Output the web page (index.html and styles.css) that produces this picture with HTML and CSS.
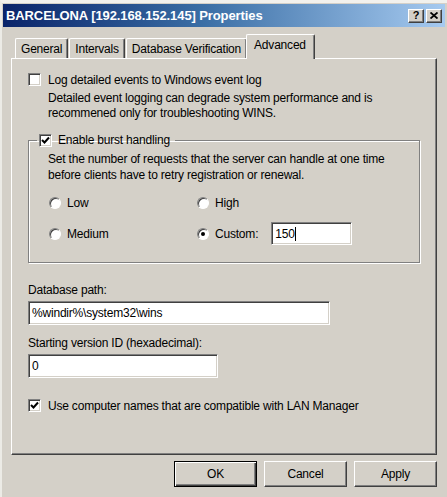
FILE: index.html
```html
<!DOCTYPE html>
<html lang="en">
<head>
  <meta charset="UTF-8">
  <meta name="viewport" content="width=device-width, initial-scale=1.0">
  <title>BARCELONA Properties</title>
  <link rel="stylesheet" href="styles.css">
</head>
<body>
  <div class="window">
    <div class="titlebar">
      <span class="title">BARCELONA [192.168.152.145] Properties</span>
      <div class="caption-buttons">
        <span class="caption-btn help">?</span>
        <span class="caption-btn">
          <svg width="8" height="7" viewBox="0 0 8 7"><path d="M0.5 0.5 L7.5 6.5 M7.5 0.5 L0.5 6.5" stroke="#000" stroke-width="1.8"/></svg>
        </span>
      </div>
    </div>

    <div class="tabs">
      <div class="tab">General</div>
      <div class="tab">Intervals</div>
      <div class="tab">Database Verification</div>
      <div class="tab active">Advanced</div>
    </div>

    <div class="panel">
      <label class="check-row">
        <span class="checkbox"></span>
        Log detailed events to Windows event log
      </label>
      <p class="note">Detailed event logging can degrade system performance and is<br>recommened only for troubleshooting WINS.</p>

      <fieldset class="group">
        <legend>
          <span class="checkbox"><svg width="9" height="9" viewBox="0 0 9 9"><path d="M1 4 L3.5 6.5 L8 1.5" fill="none" stroke="#000" stroke-width="2"/></svg></span>
          Enable burst handling
        </legend>
        <p class="group-note">Set the number of requests that the server can handle at one time<br>before clients have to retry registration or renewal.</p>
        <div class="radios">
          <label class="radio-row"><span class="radio"></span>Low</label>
          <label class="radio-row"><span class="radio"></span>High</label>
          <label class="radio-row"><span class="radio"></span>Medium</label>
          <label class="radio-row"><span class="radio selected"></span>Custom:<span class="textbox custom">150<span class="caret"></span></span></label>
        </div>
      </fieldset>

      <div class="field-label">Database path:</div>
      <div class="textbox path">%windir%\system32\wins</div>

      <div class="field-label second">Starting version ID (hexadecimal):</div>
      <div class="textbox version">0</div>

      <label class="check-row lanman">
        <span class="checkbox"><svg width="9" height="9" viewBox="0 0 9 9"><path d="M1 4 L3.5 6.5 L8 1.5" fill="none" stroke="#000" stroke-width="2"/></svg></span>
        Use computer names that are compatible with LAN Manager
      </label>
    </div>

    <div class="buttons">
      <span class="button default">OK</span>
      <span class="button">Cancel</span>
      <span class="button">Apply</span>
    </div>
  </div>
</body>
</html>
```

FILE: styles.css
```css
body {
  margin: 0;
  background-color: #d4d0c8;
  font-family: 'Liberation Sans', Arial, sans-serif;
  font-size: 12px;
  letter-spacing: -0.2px;
  color: #000;
}
.window {
  width: 447px;
  height: 497px;
  border-top: 3px solid #f2f1ed;
  border-left: 2px solid #ecebe6;
  box-sizing: border-box;
}
.titlebar {
  height: 23px;
  margin: 1px 2px 0 1px;
  background: linear-gradient(to right, #0a246a 0%, #3a6ea5 45%, #a6caf0 100%);
  display: flex;
  align-items: center;
  justify-content: space-between;
  padding: 0 3px 0 3px;
}
.title {
  color: #fff;
  font-weight: bold;
  font-size: 13px;
  letter-spacing: -0.1px;
}
.caption-buttons {
  display: flex;
  gap: 2px;
}
.caption-btn {
  width: 16px;
  height: 14px;
  box-sizing: border-box;
  background-color: #d4d0c8;
  border: 1px solid;
  border-color: #fff #404040 #404040 #fff;
  box-shadow: inset -1px -1px #808080;
  display: flex;
  align-items: center;
  justify-content: center;
}
.help {
  font-weight: bold;
  font-size: 11px;
  line-height: 1;
}
.tabs {
  display: flex;
  align-items: flex-end;
  margin: 7px 0 0 11px;
  padding-left: 2px;
  height: 24px;
  position: relative;
  z-index: 1;
}
.tab {
  height: 20px;
  padding: 1px 5px 0 5px;
  box-sizing: border-box;
  border: 1px solid;
  border-color: #fff #404040 transparent #fff;
  border-bottom: none;
  border-radius: 2px 2px 0 0;
  box-shadow: inset -1px 0 #808080;
  display: flex;
  align-items: center;
  margin-right: 1px;
}
.tab.active {
  height: 25px;
  padding: 0 8px 4px 7px;
  margin: 0 0 -1px -2px;
  background-color: #d4d0c8;
}
.panel {
  width: 426px;
  height: 397px;
  margin-left: 9px;
  box-sizing: border-box;
  border: 1px solid;
  border-color: #fff #404040 #404040 #fff;
  box-shadow: inset -1px -1px #808080;
  padding: 14px 16px 0 16px;
}
.check-row {
  display: flex;
  align-items: center;
  gap: 7px;
  height: 13px;
}
.checkbox {
  width: 13px;
  height: 13px;
  box-sizing: border-box;
  background-color: #fff;
  border: 1px solid;
  border-color: #808080 #fff #fff #808080;
  box-shadow: inset 1px 1px #404040, inset -1px -1px #d4d0c8;
  display: flex;
  align-items: center;
  justify-content: center;
  flex-shrink: 0;
}
.note {
  margin: 5px 0 0 20px;
  line-height: 15px;
}
.group {
  margin: 12px 0 0 0;
  width: 392px;
  box-sizing: border-box;
  border: 1px solid #808080;
  box-shadow: inset 1px 1px #fff, 1px 1px #fff;
  padding: 3px 0 17px 19px;
}
.group legend {
  display: flex;
  align-items: center;
  gap: 6px;
  padding: 0 5px 0 2px;
  margin-left: -11px;
  line-height: 15px;
}
.group-note {
  margin: 0;
  line-height: 16px;
}
.radios {
  display: grid;
  grid-template-columns: 148px auto;
  grid-auto-rows: 23px;
  row-gap: 8px;
  margin: 8px 0 0 1px;
}
.radio-row {
  display: flex;
  align-items: center;
  gap: 6px;
}
.radio {
  width: 12px;
  height: 12px;
  box-sizing: border-box;
  border-radius: 50%;
  background-color: #fff;
  border: 1px solid;
  border-color: #808080 #fff #fff #808080;
  box-shadow: inset 1px 1px #404040;
  display: flex;
  align-items: center;
  justify-content: center;
}
.radio.selected::after {
  content: "";
  width: 4px;
  height: 4px;
  border-radius: 50%;
  background-color: #000;
}
.textbox {
  box-sizing: border-box;
  background-color: #fff;
  border: 1px solid;
  border-color: #808080 #fff #fff #808080;
  box-shadow: inset 1px 1px #404040, inset -1px -1px #d4d0c8;
  display: flex;
  align-items: center;
  padding-left: 3px;
}
.custom {
  width: 81px;
  height: 23px;
  margin-left: 7px;
}
.caret {
  width: 1px;
  height: 14px;
  background-color: #000;
}
.field-label {
  margin-top: 20px;
  line-height: 15px;
}
.field-label.second {
  margin-top: 11px;
}
.textbox.path {
  width: 302px;
  height: 24px;
  margin-top: 3px;
}
.textbox.version {
  width: 190px;
  height: 24px;
  margin-top: 3px;
}
.lanman {
  margin-top: 21px;
}
.buttons {
  display: flex;
  justify-content: flex-end;
  gap: 7px;
  width: 435px;
  margin-top: 6px;
}
.button {
  width: 83px;
  height: 26px;
  box-sizing: border-box;
  border: 1px solid;
  border-color: #fff #404040 #404040 #fff;
  box-shadow: inset -1px -1px #808080;
  display: flex;
  align-items: center;
  justify-content: center;
}
.button.default {
  border: 1px solid #000;
  box-shadow: inset 1px 1px #fff, inset -1px -1px #404040, inset -2px -2px #808080;
}
```
